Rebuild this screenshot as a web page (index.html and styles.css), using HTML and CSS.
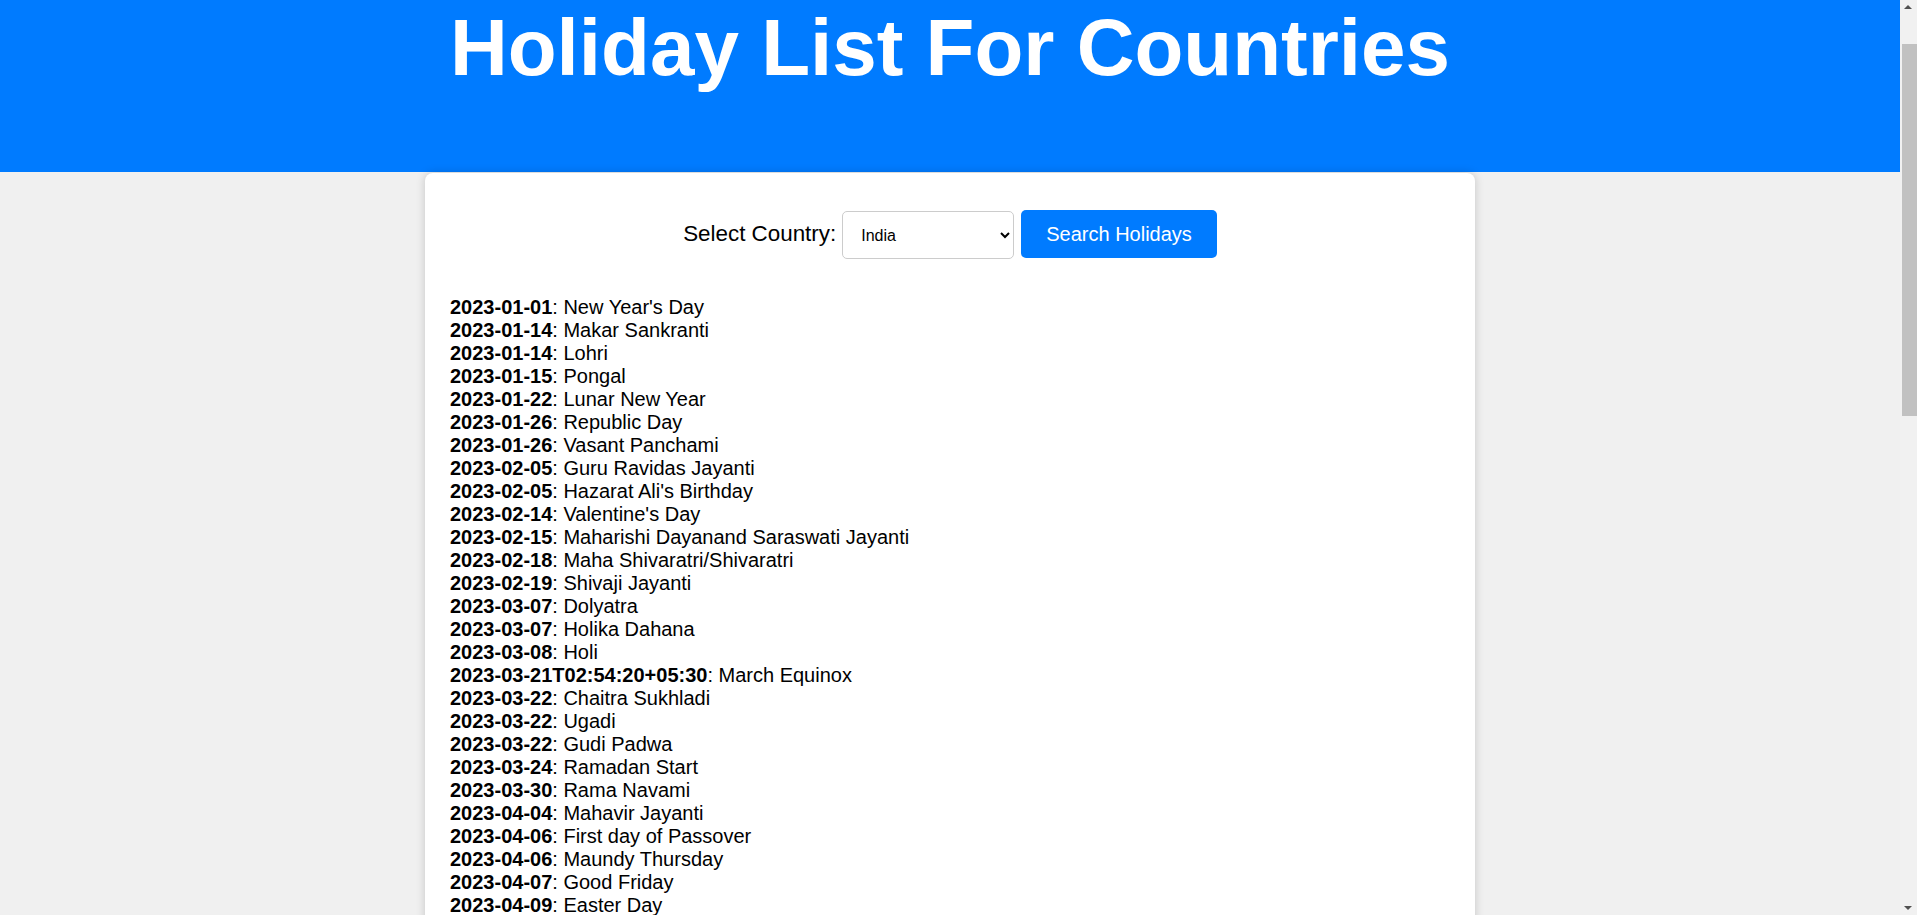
FILE: index.html
```html
<!DOCTYPE html>
<html lang="en">
<head>
<meta charset="utf-8">
<title>Holiday List For Countries</title>
<link rel="stylesheet" href="styles.css">
</head>
<body>
<header class="site-header">
  <h1 class="site-title">Holiday List For Countries</h1>
</header>
<main class="card">
  <form class="search-row">
    <label class="search-label" for="country">Select Country:</label>
    <select class="country-select" id="country">
      <option selected>India</option>
      <option>United States</option>
      <option>United Kingdom</option>
      <option>Canada</option>
      <option>Australia</option>
    </select>
    <button type="button" class="search-btn">Search Holidays</button>
  </form>
  <div class="holiday-list">
    <div class="holiday"><b>2023-01-01</b>: New Year's Day</div>
    <div class="holiday"><b>2023-01-14</b>: Makar Sankranti</div>
    <div class="holiday"><b>2023-01-14</b>: Lohri</div>
    <div class="holiday"><b>2023-01-15</b>: Pongal</div>
    <div class="holiday"><b>2023-01-22</b>: Lunar New Year</div>
    <div class="holiday"><b>2023-01-26</b>: Republic Day</div>
    <div class="holiday"><b>2023-01-26</b>: Vasant Panchami</div>
    <div class="holiday"><b>2023-02-05</b>: Guru Ravidas Jayanti</div>
    <div class="holiday"><b>2023-02-05</b>: Hazarat Ali's Birthday</div>
    <div class="holiday"><b>2023-02-14</b>: Valentine's Day</div>
    <div class="holiday"><b>2023-02-15</b>: Maharishi Dayanand Saraswati Jayanti</div>
    <div class="holiday"><b>2023-02-18</b>: Maha Shivaratri/Shivaratri</div>
    <div class="holiday"><b>2023-02-19</b>: Shivaji Jayanti</div>
    <div class="holiday"><b>2023-03-07</b>: Dolyatra</div>
    <div class="holiday"><b>2023-03-07</b>: Holika Dahana</div>
    <div class="holiday"><b>2023-03-08</b>: Holi</div>
    <div class="holiday"><b>2023-03-21T02:54:20+05:30</b>: March Equinox</div>
    <div class="holiday"><b>2023-03-22</b>: Chaitra Sukhladi</div>
    <div class="holiday"><b>2023-03-22</b>: Ugadi</div>
    <div class="holiday"><b>2023-03-22</b>: Gudi Padwa</div>
    <div class="holiday"><b>2023-03-24</b>: Ramadan Start</div>
    <div class="holiday"><b>2023-03-30</b>: Rama Navami</div>
    <div class="holiday"><b>2023-04-04</b>: Mahavir Jayanti</div>
    <div class="holiday"><b>2023-04-06</b>: First day of Passover</div>
    <div class="holiday"><b>2023-04-06</b>: Maundy Thursday</div>
    <div class="holiday"><b>2023-04-07</b>: Good Friday</div>
    <div class="holiday"><b>2023-04-09</b>: Easter Day</div>
    <div class="holiday"><b>2023-04-14</b>: Vaisakhi</div>
    <div class="holiday"><b>2023-04-14</b>: Ambedkar Jayanti</div>
    <div class="holiday"><b>2023-04-15</b>: Mesadi / Vaisakhadi</div>
    <div class="holiday"><b>2023-04-15</b>: Bahag Bihu/Vaisakhadi</div>
    <div class="holiday"><b>2023-04-21</b>: Jamat Ul-Vida</div>
    <div class="holiday"><b>2023-04-22</b>: Ramzan Id/Eid-ul-Fitar</div>
    <div class="holiday"><b>2023-05-05</b>: Buddha Purnima/Vesak</div>
    <div class="holiday"><b>2023-05-09</b>: Birthday of Rabindranath</div>
    <div class="holiday"><b>2023-05-14</b>: Mother's Day</div>
    <div class="holiday"><b>2023-06-18</b>: Father's Day</div>
    <div class="holiday"><b>2023-06-20</b>: Rath Yatra</div>
    <div class="holiday"><b>2023-06-21T20:27:43+05:30</b>: June Solstice</div>
    <div class="holiday"><b>2023-06-29</b>: Bakrid/Eid ul-Adha</div>
    <div class="holiday"><b>2023-07-29</b>: Muharram/Ashura</div>
    <div class="holiday"><b>2023-08-06</b>: Friendship Day</div>
    <div class="holiday"><b>2023-08-15</b>: Independence Day</div>
    <div class="holiday"><b>2023-08-16</b>: Parsi New Year</div>
    <div class="holiday"><b>2023-08-29</b>: Onam</div>
    <div class="holiday"><b>2023-08-30</b>: Raksha Bandhan (Rakhi)</div>
    <div class="holiday"><b>2023-09-06</b>: Janmashtami (Smarta)</div>
    <div class="holiday"><b>2023-09-07</b>: Janmashtami</div>
    <div class="holiday"><b>2023-09-19</b>: Ganesh Chaturthi/Vinayaka Chaturthi</div>
    <div class="holiday"><b>2023-09-23T11:20:11+05:30</b>: September Equinox</div>
    <div class="holiday"><b>2023-09-28</b>: Milad un-Nabi/Id-e-Milad</div>
    <div class="holiday"><b>2023-10-02</b>: Mahatma Gandhi Jayanti</div>
    <div class="holiday"><b>2023-10-15</b>: First Day of Sharad Navratri</div>
    <div class="holiday"><b>2023-10-20</b>: First Day of Durga Puja Festivities</div>
    <div class="holiday"><b>2023-10-21</b>: Maha Saptami</div>
    <div class="holiday"><b>2023-10-22</b>: Maha Ashtami</div>
    <div class="holiday"><b>2023-10-23</b>: Maha Navami</div>
    <div class="holiday"><b>2023-10-24</b>: Dussehra</div>
    <div class="holiday"><b>2023-10-28</b>: Maharishi Valmiki Jayanti</div>
    <div class="holiday"><b>2023-11-01</b>: Karaka Chaturthi (Karva Chauth)</div>
    <div class="holiday"><b>2023-11-12</b>: Naraka Chaturdasi</div>
    <div class="holiday"><b>2023-11-12</b>: Diwali/Deepavali</div>
    <div class="holiday"><b>2023-11-13</b>: Govardhan Puja</div>
    <div class="holiday"><b>2023-11-15</b>: Bhai Duj</div>
    <div class="holiday"><b>2023-11-19</b>: Chhat Puja (Pratihar Sashthi/Surya Sashthi)</div>
    <div class="holiday"><b>2023-11-24</b>: Guru Tegh Bahadur's Martyrdom Day</div>
    <div class="holiday"><b>2023-11-27</b>: Guru Nanak Jayanti</div>
    <div class="holiday"><b>2023-12-22T08:57:25+05:30</b>: December Solstice</div>
    <div class="holiday"><b>2023-12-24</b>: Christmas Eve</div>
    <div class="holiday"><b>2023-12-25</b>: Christmas</div>
    <div class="holiday"><b>2023-12-31</b>: New Year's Eve</div>
  </div>
</main>
<div class="fake-scrollbar" aria-hidden="true">
  <span class="sb-arrow sb-up"></span>
  <span class="sb-thumb"></span>
  <span class="sb-arrow sb-down"></span>
</div>
</body>
</html>
```
FILE: styles.css
```css
html {
  background: #f0f0f0;
}

body {
  margin: 0 17px 0 0;
  background: #f0f0f0;
  color: #000;
  font-family: "Liberation Sans", Arial, sans-serif;
}

.site-header {
  box-sizing: border-box;
  height: 172px;
  padding-top: 2px;
  background: #007bff;
  color: #fff;
  text-align: center;
}

.site-title {
  margin: 0;
  font-size: 80px;
  font-weight: bold;
  line-height: normal;
}

.card {
  display: block;
  max-width: 1000px;
  margin: 1px auto 40px;
  padding: 37px 25px 25px;
  background: #fff;
  border-radius: 8px;
  box-shadow: 0 0 10px rgba(0, 0, 0, 0.18);
}

.search-row {
  display: flex;
  justify-content: center;
  align-items: baseline;
  gap: 6px;
  margin: 0;
}

.search-label {
  font-size: 22.4px;
}

.country-select {
  box-sizing: border-box;
  width: 172px;
  height: 48px;
  padding: 0 8px 0 14px;
  border: 1px solid #ccc;
  border-radius: 5px;
  background: #fff;
  color: #000;
  font-family: "Liberation Sans", Arial, sans-serif;
  font-size: 16px;
}

.search-btn {
  box-sizing: border-box;
  height: 48px;
  margin-left: 1px;
  padding: 0 25px;
  border: none;
  border-radius: 5px;
  background: #007bff;
  color: #fff;
  font-family: "Liberation Sans", Arial, sans-serif;
  font-size: 20px;
  cursor: pointer;
}

.holiday-list {
  margin-top: 37px;
}

.holiday {
  font-size: 20px;
  line-height: 23px;
}

/* decorative classic scrollbar drawn over the right edge */
.fake-scrollbar {
  position: fixed;
  top: 0;
  right: 0;
  width: 17px;
  height: 100%;
  background: #f1f1f1;
}

.sb-thumb {
  position: absolute;
  top: 44px;
  left: 2px;
  right: 0;
  height: 372px;
  background: #c1c1c1;
}

.sb-arrow {
  position: absolute;
  left: 4px;
  width: 0;
  height: 0;
  border-left: 4.5px solid transparent;
  border-right: 4.5px solid transparent;
}

.sb-up {
  top: 5px;
  border-bottom: 4px solid #505050;
}

.sb-down {
  bottom: 5px;
  border-top: 4px solid #505050;
}
```
